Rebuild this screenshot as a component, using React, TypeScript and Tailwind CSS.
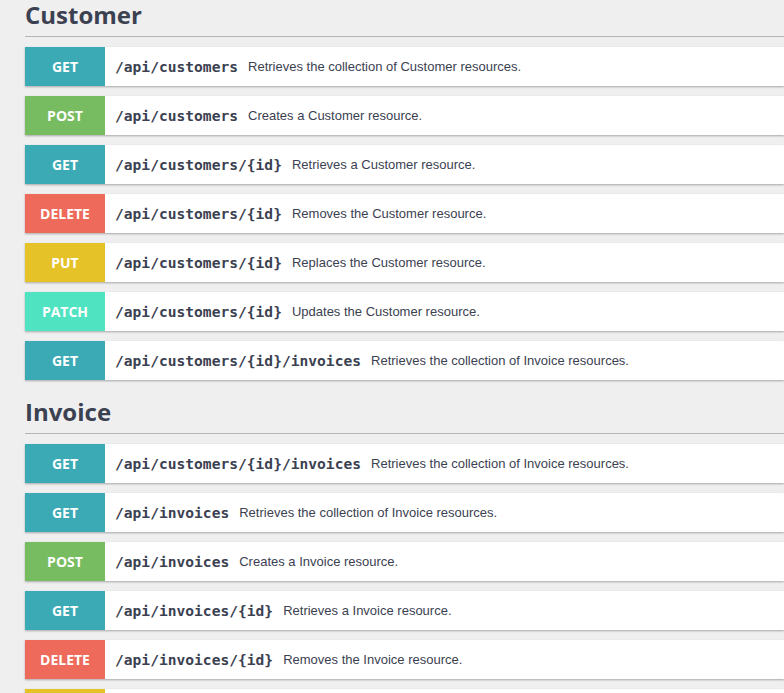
import React from 'react';

type Method = 'GET' | 'POST' | 'PUT' | 'PATCH' | 'DELETE';

interface Operation {
  method: Method;
  path: string;
  summary: string;
}

interface Tag {
  name: string;
  operations: Operation[];
}

const methodColors: Record<Method, string> = {
  GET: 'bg-[#3caab5]',
  POST: 'bg-[#78bc61]',
  PUT: 'bg-[#e6c229]',
  PATCH: 'bg-[#50e3c2]',
  DELETE: 'bg-[#ee6b5b]',
};

const tags: Tag[] = [
  {
    name: 'Customer',
    operations: [
      { method: 'GET', path: '/api/customers', summary: 'Retrieves the collection of Customer resources.' },
      { method: 'POST', path: '/api/customers', summary: 'Creates a Customer resource.' },
      { method: 'GET', path: '/api/customers/{id}', summary: 'Retrieves a Customer resource.' },
      { method: 'DELETE', path: '/api/customers/{id}', summary: 'Removes the Customer resource.' },
      { method: 'PUT', path: '/api/customers/{id}', summary: 'Replaces the Customer resource.' },
      { method: 'PATCH', path: '/api/customers/{id}', summary: 'Updates the Customer resource.' },
      { method: 'GET', path: '/api/customers/{id}/invoices', summary: 'Retrieves the collection of Invoice resources.' },
    ],
  },
  {
    name: 'Invoice',
    operations: [
      { method: 'GET', path: '/api/customers/{id}/invoices', summary: 'Retrieves the collection of Invoice resources.' },
      { method: 'GET', path: '/api/invoices', summary: 'Retrieves the collection of Invoice resources.' },
      { method: 'POST', path: '/api/invoices', summary: 'Creates a Invoice resource.' },
      { method: 'GET', path: '/api/invoices/{id}', summary: 'Retrieves a Invoice resource.' },
      { method: 'DELETE', path: '/api/invoices/{id}', summary: 'Removes the Invoice resource.' },
      { method: 'PUT', path: '/api/invoices/{id}', summary: 'Replaces the Invoice resource.' },
      { method: 'PATCH', path: '/api/invoices/{id}', summary: 'Updates the Invoice resource.' },
    ],
  },
];

const OperationRow = ({ op }: { op: Operation }) => (
  <div className="flex items-center h-[39px] bg-white shadow-[0_1px_2px_rgba(0,0,0,0.3)]">
    {/* method badge */}
    <div
      className={`${methodColors[op.method]} w-[80px] h-full flex items-center justify-center text-white text-[14px] font-bold font-['Open_Sans',sans-serif]`}
    >
      {op.method}
    </div>
    <span className="ml-[10px] text-[14.6px] font-bold text-[#3b4151] font-['DejaVu_Sans_Mono',monospace]">
      {op.path}
    </span>
    <span className="ml-[10px] text-[13px] text-[#3b4151] font-['Liberation_Sans',Arial,sans-serif]">
      {op.summary}
    </span>
  </div>
);

export default function App() {
  return (
    <div className="min-h-screen bg-[#efefef] pl-[25px] overflow-hidden">
      {tags.map((tag, i) => (
        <section key={tag.name} className={i > 0 ? 'mt-[17px]' : ''}>
          <h2 className="text-[24px] leading-[30px] font-bold text-[#3b4151] pb-[6px] border-b border-[#b3b5bb] font-['Open_Sans',sans-serif]">
            {tag.name}
          </h2>
          <div className="flex flex-col gap-[10px] mt-[10px]">
            {tag.operations.map((op, j) => (
              <OperationRow key={j} op={op} />
            ))}
          </div>
        </section>
      ))}
    </div>
  );
}
